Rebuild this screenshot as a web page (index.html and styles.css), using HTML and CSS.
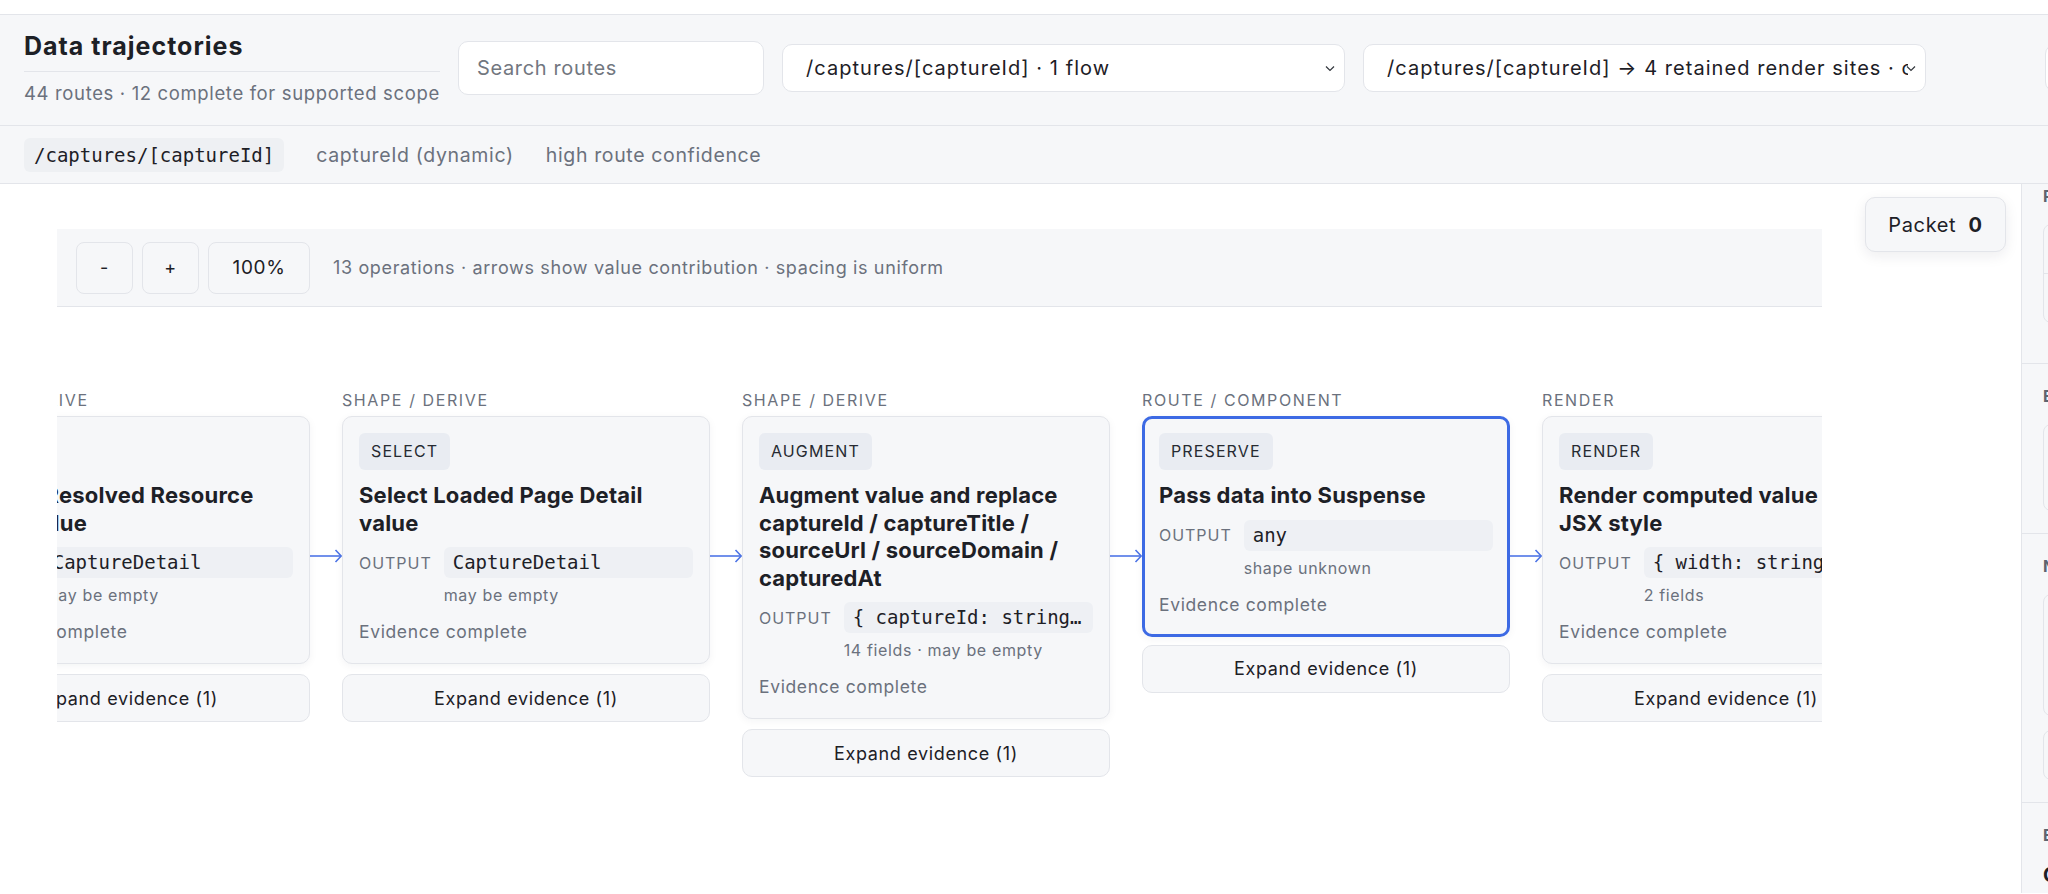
FILE: index.html
```html
<!DOCTYPE html>
<html lang="en">
<head>
    <meta charset="UTF-8">
    <meta name="viewport" content="width=device-width, initial-scale=1.0">
    <title>Data trajectories</title>

    <link rel="stylesheet" href="styles.css">
</head>
<body>
    <header class="topbar">
        <div class="brand">
            <h1>Data trajectories</h1>
            <p>44 routes · 12 complete for supported scope</p>
        </div>
        <input class="search" type="text" placeholder="Search routes">
        <div class="select">
            <span>/captures/[captureId] · 1 flow</span>
            <svg class="chevron" viewBox="0 0 10 7"><polyline points="1,1.5 5,5.5 9,1.5"/></svg>
        </div>
        <div class="select">
            <span>/captures/[captureId] → 4 retained render sites · composed style</span>
            <svg class="chevron" viewBox="0 0 10 7"><polyline points="1,1.5 5,5.5 9,1.5"/></svg>
        </div>
        <div class="select select-more"><span>All stages</span></div>
    </header>

    <div class="routebar">
        <code class="route-chip">/captures/[captureId]</code>
        <span>captureId (dynamic)</span>
        <span>high route confidence</span>
    </div>

    <div class="workspace">
        <main class="canvas">
            <button class="packet">Packet <b>0</b></button>

            <div class="viewport">
                <div class="toolbar">
                    <button class="tool">-</button>
                    <button class="tool">+</button>
                    <button class="tool tool-zoom">100%</button>
                    <span class="tool-note">13 operations · arrows show value contribution · spacing is uniform</span>
                </div>

                <div class="track">
                    <div class="step">
                        <div class="stage">Shape / Derive</div>
                        <div class="card">
                            <span class="badge">READ</span>
                            <h3>Expose Resolved Resource Detail value</h3>
                            <div class="output">
                                <span class="output-label">Output</span>
                                <code class="type">CaptureDetail</code>
                                <span class="hint">may be empty</span>
                            </div>
                            <div class="evidence">Evidence complete</div>
                        </div>
                        <button class="expand">Expand evidence (1)</button>
                    </div>

                    <div class="link">
                        <svg viewBox="0 0 32 16"><line x1="0" y1="8" x2="31" y2="8"/><polyline points="25.5,2 31.2,8 25.5,14"/></svg>
                    </div>

                    <div class="step">
                        <div class="stage">Shape / Derive</div>
                        <div class="card">
                            <span class="badge">SELECT</span>
                            <h3>Select Loaded Page Detail value</h3>
                            <div class="output">
                                <span class="output-label">Output</span>
                                <code class="type">CaptureDetail</code>
                                <span class="hint">may be empty</span>
                            </div>
                            <div class="evidence">Evidence complete</div>
                        </div>
                        <button class="expand">Expand evidence (1)</button>
                    </div>

                    <div class="link">
                        <svg viewBox="0 0 32 16"><line x1="0" y1="8" x2="31" y2="8"/><polyline points="25.5,2 31.2,8 25.5,14"/></svg>
                    </div>

                    <div class="step">
                        <div class="stage">Shape / Derive</div>
                        <div class="card">
                            <span class="badge">AUGMENT</span>
                            <h3>Augment value and replace captureId / captureTitle / sourceUrl / sourceDomain / capturedAt</h3>
                            <div class="output">
                                <span class="output-label">Output</span>
                                <code class="type">{ captureId: string; captureTitle: string }</code>
                                <span class="hint">14 fields · may be empty</span>
                            </div>
                            <div class="evidence">Evidence complete</div>
                        </div>
                        <button class="expand">Expand evidence (1)</button>
                    </div>

                    <div class="link">
                        <svg viewBox="0 0 32 16"><line x1="0" y1="8" x2="31" y2="8"/><polyline points="25.5,2 31.2,8 25.5,14"/></svg>
                    </div>

                    <div class="step">
                        <div class="stage">Route / Component</div>
                        <div class="card selected">
                            <span class="badge">PRESERVE</span>
                            <h3>Pass data into Suspense</h3>
                            <div class="output">
                                <span class="output-label">Output</span>
                                <code class="type">any</code>
                                <span class="hint">shape unknown</span>
                            </div>
                            <div class="evidence">Evidence complete</div>
                        </div>
                        <button class="expand">Expand evidence (1)</button>
                    </div>

                    <div class="link">
                        <svg viewBox="0 0 32 16"><line x1="0" y1="8" x2="31" y2="8"/><polyline points="25.5,2 31.2,8 25.5,14"/></svg>
                    </div>

                    <div class="step">
                        <div class="stage">Render</div>
                        <div class="card">
                            <span class="badge">RENDER</span>
                            <h3>Render computed value into JSX style</h3>
                            <div class="output">
                                <span class="output-label">Output</span>
                                <code class="type">{ width: string; height: string }</code>
                                <span class="hint">2 fields</span>
                            </div>
                            <div class="evidence">Evidence complete</div>
                        </div>
                        <button class="expand">Expand evidence (1)</button>
                    </div>
                </div>
            </div>
        </main>

        <aside class="inspector">
            <section class="panel panel-first">
                <h4>Packet</h4>
                <div class="box">
                    <div class="box-row">No operations selected</div>
                    <div class="box-row">0 fields</div>
                </div>
            </section>
            <section class="panel">
                <h4>Evidence</h4>
                <div class="box box-tall"></div>
            </section>
            <section class="panel">
                <h4>Notes</h4>
                <div class="box box-notes"></div>
                <div class="box box-short"></div>
            </section>
            <section class="panel">
                <h4>Export</h4>
                <div class="export">Open packet</div>
            </section>
        </aside>
    </div>
</body>
</html>
```

FILE: styles.css
```css
html, body {
    margin: 0;
    overflow: hidden;
}

body {
    width: 2048px;
    height: 894px;
    padding-top: 14px;
    box-sizing: border-box;
    font-family: Inter, "Noto Sans", sans-serif;
    letter-spacing: 0.04em;
    color: #1d2026;
    background: #fff;
}

button, input {
    font-family: inherit;
    letter-spacing: inherit;
}

/* header */
.topbar {
    display: flex;
    align-items: center;
    gap: 18px;
    padding: 16px 24px 20px;
    background: #f6f7f9;
    border-top: 1px solid #e3e5ea;
    border-bottom: 1px solid #e3e5ea;
    overflow: hidden;
}

.brand {
    flex: 0 0 416px;
}

.brand h1 {
    margin: 0;
    padding-bottom: 10px;
    font-size: 25px;
    line-height: 30px;
    font-weight: 700;
    letter-spacing: 1px;
    border-bottom: 1px solid #e3e5ea;
}

.brand p {
    margin: 9px 0 0;
    font-size: 18.5px;
    line-height: 24px;
    color: #6b717d;
}

.search {
    flex: 0 0 306px;
    width: 306px;
    min-width: 0;
    height: 54px;
    box-sizing: border-box;
    padding: 0 18px;
    font-size: 20px;
    color: #1d2026;
    background: #fff;
    border: 1px solid #e3e5ea;
    border-radius: 10px;
}

.search::placeholder {
    color: #72777f;
}

.select {
    position: relative;
    flex: 0 0 563px;
    height: 48px;
    box-sizing: border-box;
    display: flex;
    align-items: center;
    padding: 0 17px 0 23px;
    font-size: 20px;
    letter-spacing: 1.05px;
    background: #fff;
    border: 1px solid #e3e5ea;
    border-radius: 10px;
    overflow: hidden;
}

.select span {
    white-space: nowrap;
    overflow: hidden;
}

.chevron {
    position: absolute;
    right: 9px;
    top: 20px;
    width: 10px;
    height: 7px;
    fill: none;
    stroke: #33373d;
    stroke-width: 1.2;
}

.select-more {
    flex-basis: 200px;
    margin-left: 101px;
}

/* route meta row */
.routebar {
    display: flex;
    align-items: center;
    gap: 32px;
    height: 57px;
    padding: 0 24px;
    background: #f6f7f9;
    border-bottom: 1px solid #e3e5ea;
    font-size: 19.5px;
    color: #6b717d;
}

.route-chip {
    padding: 5px 10px;
    font-family: "DejaVu Sans Mono", monospace;
    font-size: 19px;
    line-height: 24px;
    letter-spacing: 0;
    color: #1d2026;
    background: #eef0f3;
    border-radius: 6px;
}

/* workspace */
.workspace {
    display: flex;
    height: 709px;
}

.canvas {
    position: relative;
    flex: 0 0 2021px;
    box-sizing: border-box;
    padding: 45px 0 0 57px;
    background: #fff;
}

.packet {
    position: absolute;
    top: 13px;
    right: 15px;
    width: 141px;
    height: 55px;
    font-size: 20px;
    color: #1d2026;
    background: #f6f7f9;
    border: 1px solid #e3e5ea;
    border-radius: 10px;
    box-shadow: 0 4px 14px rgba(20, 30, 50, 0.08);
}

.packet b {
    margin-left: 6px;
}

.viewport {
    width: 1765px;
    overflow: hidden;
}

.toolbar {
    display: flex;
    align-items: center;
    gap: 9px;
    height: 77px;
    padding-left: 19px;
    background: #f6f7f9;
    border-bottom: 1px solid #e3e5ea;
}

.tool {
    min-width: 57px;
    height: 52px;
    padding: 0 18px;
    font-size: 18px;
    color: #1d2026;
    background: #f6f7f9;
    border: 1px solid #e3e5ea;
    border-radius: 8px;
}

.tool-zoom {
    width: 102px;
    font-size: 19px;
}

.tool-note {
    margin-left: 14px;
    font-size: 18px;
    color: #6b717d;
}

/* flow lanes */
.track {
    display: flex;
    align-items: flex-start;
    margin: 83px 0 0 -115px;
}

.step {
    flex: 0 0 368px;
}

.link {
    flex: 0 0 32px;
    padding-top: 158px;
}

.link svg {
    display: block;
    width: 32px;
    height: 16px;
    fill: none;
    stroke: #4d74e6;
    stroke-width: 1.6;
}

.stage {
    margin-bottom: 6px;
    font-size: 16px;
    line-height: 20px;
    letter-spacing: 0.1em;
    text-transform: uppercase;
    color: #6b717d;
    white-space: nowrap;
}

.card {
    display: flex;
    flex-direction: column;
    align-items: flex-start;
    padding: 16px 16px 19px;
    background: #f6f7f9;
    border: 1px solid #e3e5ea;
    border-radius: 10px;
    box-shadow: 0 2px 8px rgba(20, 30, 50, 0.05);
}

.card.selected {
    padding: 14px 14px 17px;
    border: 3px solid #3d6ae4;
}

.badge {
    padding: 7px 12px;
    font-size: 16px;
    line-height: 23px;
    letter-spacing: 0.07em;
    color: #262a31;
    background: #e9ecf2;
    border-radius: 6px;
}

.card h3 {
    margin: 12px 0 0;
    font-size: 22px;
    line-height: 27.5px;
    font-weight: 700;
    letter-spacing: 0.2px;
}

.output {
    display: grid;
    grid-template-columns: auto 1fr;
    column-gap: 12px;
    align-items: center;
    align-self: stretch;
    margin-top: 10px;
}

.output-label {
    font-size: 16px;
    letter-spacing: 0.06em;
    text-transform: uppercase;
    color: #6b717d;
}

.type {
    min-width: 0;
    padding: 4px 9px;
    font-family: "DejaVu Sans Mono", monospace;
    font-size: 19px;
    line-height: 23px;
    letter-spacing: 0;
    color: #1d2026;
    background: #eef0f4;
    border-radius: 6px;
    white-space: nowrap;
    overflow: hidden;
    text-overflow: ellipsis;
}

.hint {
    grid-column: 2;
    margin-top: 6px;
    font-size: 16px;
    line-height: 22px;
    color: #6b717d;
}

.evidence {
    margin-top: 14px;
    font-size: 17.5px;
    line-height: 24px;
    color: #6b717d;
}

.expand {
    display: block;
    width: 100%;
    height: 48px;
    margin-top: 10px;
    font-size: 18px;
    color: #1d2026;
    background: #f6f7f9;
    border: 1px solid #e3e5ea;
    border-radius: 10px;
}

.selected + .expand {
    margin-top: 8px;
}

/* inspector */
.inspector {
    flex: 0 0 380px;
    background: #f6f7f9;
    border-left: 1px solid #e3e5ea;
}

.panel {
    padding: 22px 20px 22px 21px;
    border-bottom: 1px solid #e3e5ea;
}

.panel-first {
    padding-top: 2px;
    padding-bottom: 40px;
}

.panel h4 {
    margin: 0 0 18px;
    font-size: 16px;
    line-height: 20px;
    letter-spacing: 0.05em;
    text-transform: uppercase;
    color: #5d6470;
}

.box {
    border: 1px solid #e3e5ea;
    border-radius: 8px;
}

.box-row {
    height: 48px;
    padding: 0 14px;
    line-height: 48px;
    color: #6b717d;
}

.box-row + .box-row {
    border-top: 1px solid #e3e5ea;
}

.box-tall {
    height: 85px;
}

.box-notes {
    height: 120px;
}

.box-short {
    height: 48px;
    margin-top: 14px;
}

.export {
    font-size: 20px;
    font-weight: 700;
}
```
